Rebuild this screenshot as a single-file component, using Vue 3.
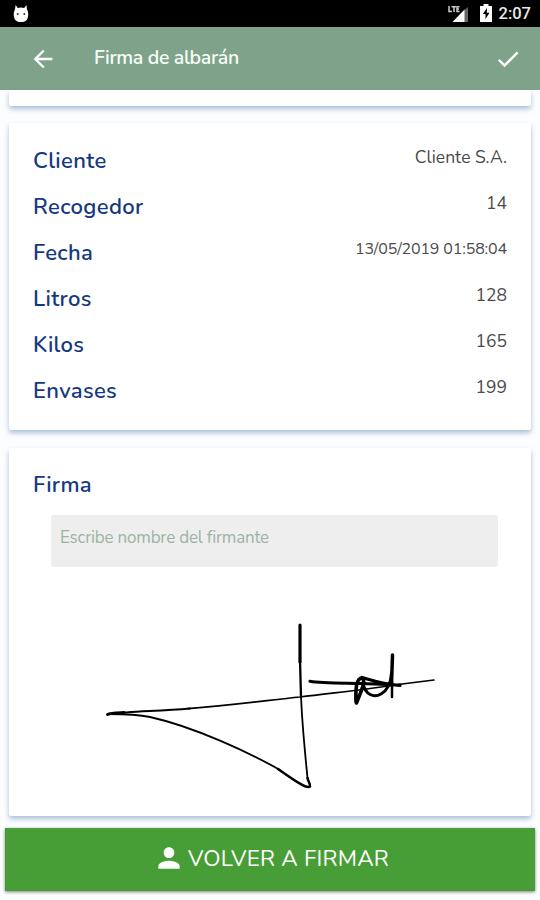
<template>
  <div class="screen">
    <div class="status-bar">
      <svg class="status-cat" width="18" height="20" viewBox="0 0 18 20">
        <path fill="#fff" d="M3 5.500 3.600 1l2.200 3a9 9 0 0 1 6.400 0L14.400 1l.6 4.500C17 9 16.400 14 14.500 16.200 11.800 18.700 6.200 18.700 3.500 16.200 1.600 14 1 9 3 5.500Z" />
        <circle cx="5.700" cy="10" r="1" fill="#333" />
        <circle cx="12.300" cy="10" r="1" fill="#333" />
      </svg>
      <div class="status-right">
        <svg class="status-signal" width="22" height="18" viewBox="0 0 22 18">
          <path fill="#666" d="M16 5.500 20 2v15h-4z" />
          <path fill="#fff" d="M4.500 17 16.500 4.500V17z" />
          <path fill="none" stroke="#ccc" stroke-width="1.500" d="M1 1v5.500H4M3.500 1.800h4.500M6 1.800V7M11.500 1.800H9v4.700h2.500M9 4h2" />
        </svg>
        <svg class="status-battery" width="12" height="18" viewBox="0 0 12 18">
          <path fill="#fff" d="M3.500 0h5v2H12v16H0V2h3.500z" />
          <path fill="#000" d="M7 4 2.800 10h2.700v5L9.500 8.700H6.800z" />
        </svg>
        <span class="status-time">2:07</span>
      </div>
    </div>

    <header class="app-bar">
      <svg class="back-icon" width="28" height="28" viewBox="0 0 24 24">
        <path fill="#fff" d="M20 11H7.830l5.590-5.590L12 4l-8 8 8 8 1.410-1.410L7.830 13H20v-2z" />
      </svg>
      <h1 class="app-title">Firma de albarán</h1>
      <svg class="check-icon" width="28" height="28" viewBox="0 0 24 24">
        <path fill="#fff" d="M9 16.170 4.830 12l-1.420 1.410L9 19 21 7l-1.410-1.410z" />
      </svg>
    </header>

    <main class="content">
      <section class="card card-previous"></section>

      <section class="card card-data">
        <div v-for="row in rows" :key="row.label" class="row">
          <span class="row-label">{{ row.label }}</span>
          <span class="row-value" :class="{ 'row-value-date': row.small }">{{ row.value }}</span>
        </div>
      </section>

      <section class="card card-sign">
        <h2 class="row-label">Firma</h2>
        <input v-model="signer" class="signer-input" type="text" placeholder="Escribe nombre del firmante" />
        <svg class="signature" width="447" height="230" viewBox="51 575 447 230">
          <g fill="none" stroke="#000" stroke-linecap="round" stroke-linejoin="round">
            <path stroke-width="3.200" d="M300 625V662" />
            <path stroke-width="2.300" d="M300 660 301 697" />
            <path stroke-width="1.800" d="M301 695C302 725 306 762 307.500 778" />
            <path stroke-width="2.500" d="M307.500 778C308 781 310.500 784 310 786.500 307 789 298 783 278 769" />
            <path stroke-width="1.800" d="M280 770C250 753 195 727 150 717 136 714 124 714 108 714" />
            <path stroke-width="2.900" d="M107.500 714.500C110 713 113 713 124 712.500" />
            <path stroke-width="2.100" d="M112 714C130 711 155 711.500 190 708.500" />
            <path stroke-width="1.700" d="M188 708.700C235 705 270 700 300 697 330 693 365 690 398 684.500 410 683 422 681.500 434 680" />
            <path stroke-width="3.200" d="M310 681.300C322 683.500 342 683 363 683.500" />
            <path stroke-width="3.600" d="M356.500 703C360 693 367 681 362 678 356 678 355.500 690 356 702" />
            <path stroke-width="3.200" d="M362 677.500C371 680 381 684 400 685.500M361 683.500 400 685" />
            <path stroke-width="3" d="M363 683C365 695 374 698 381 694 388 690 391 681 391.500 673" />
            <path stroke-width="3.500" d="M392.500 655 391.500 684" />
            <path stroke-width="2.500" d="M392 682V697" />
          </g>
        </svg>
      </section>

      <button class="sign-button" type="button">
        <svg class="person-icon" width="32" height="32" viewBox="0 0 24 24">
          <path fill="#fff" d="M12 12c2.210 0 4-1.790 4-4s-1.790-4-4-4-4 1.790-4 4 1.790 4 4 4zm0 2c-2.670 0-8 1.340-8 4v2h16v-2c0-2.660-5.330-4-8-4z" />
        </svg>
        <span>VOLVER A FIRMAR</span>
      </button>
    </main>
  </div>
</template>

<script setup>
import { ref } from 'vue'

const signer = ref('')

const rows = [
  { label: 'Cliente', value: 'Cliente S.A.' },
  { label: 'Recogedor', value: '14' },
  { label: 'Fecha', value: '13/05/2019 01:58:04', small: true },
  { label: 'Litros', value: '128' },
  { label: 'Kilos', value: '165' },
  { label: 'Envases', value: '199' },
]
</script>

<style>
body {
  margin: 0;
}
</style>

<style scoped>
.screen {
  height: 900px;
  display: flex;
  flex-direction: column;
  overflow: hidden;
  background: #fcfdff;
  font-family: Nunito, "Noto Sans", sans-serif;
}

.status-bar {
  height: 27px;
  flex: none;
  display: flex;
  align-items: center;
  justify-content: space-between;
  padding: 0 9px 0 12px;
  background: #000;
}

.status-right {
  display: flex;
  align-items: center;
}

.status-signal {
  margin-right: 1px;
}

.status-battery {
  margin: 0 7px 2px 9px;
}

.status-time {
  color: #e8e8e8;
  font-family: Roboto, sans-serif;
  font-size: 16.5px;
  font-weight: 500;
  line-height: 27px;
}

.app-bar {
  height: 63px;
  flex: none;
  box-sizing: border-box;
  display: flex;
  align-items: center;
  padding: 0 18px 0 29px;
  background: #7fa28b;
}

.app-title {
  flex: 1;
  margin: 0 0 2px 37px;
  color: #f8fff8;
  font-size: 19.5px;
  font-weight: 600;
  letter-spacing: -0.35px;
}

.content {
  flex: 1;
  display: flex;
  flex-direction: column;
}

.card {
  box-sizing: border-box;
  margin: 0 9px;
  background: #fff;
  border-radius: 2px;
  box-shadow: 0 3px 5px rgba(60, 110, 160, 0.42);
}

.card-previous {
  height: 16px;
}

.card-data {
  height: 307px;
  margin-top: 17px;
  padding: 15px 24px 0;
}

.row {
  height: 46px;
  display: flex;
  justify-content: space-between;
}

.row-label {
  margin: 0;
  color: #15397f;
  font-size: 22px;
  font-weight: 600;
  line-height: 46px;
  letter-spacing: 0.35px;
}

.row-value {
  color: #4a4a4a;
  font-size: 17.5px;
  line-height: 38px;
}

.row-value-date {
  font-size: 16px;
  letter-spacing: -0.15px;
}

.card-sign {
  height: 368px;
  margin-top: 18px;
  padding: 14px 24px 0;
  display: flex;
  flex-direction: column;
}

.signer-input {
  width: 447px;
  height: 52px;
  flex: none;
  box-sizing: border-box;
  margin: 7px 0 0 18px;
  padding: 0 9px 8px;
  border: 0;
  border-radius: 2px;
  outline: none;
  background: #eee;
  color: #333;
  font-family: inherit;
  font-size: 17px;
  letter-spacing: -0.2px;
}

.signer-input::placeholder {
  color: #9cb3a4;
  opacity: 1;
}

.signature {
  flex: none;
  margin: 8px 0 0 18px;
}

.sign-button {
  height: 63px;
  flex: none;
  display: flex;
  align-items: center;
  justify-content: center;
  gap: 3px;
  margin: 12px 5px 0;
  padding: 0 0 3px 2px;
  border: 0;
  background: #479d36;
  box-shadow: 0 1px 3px rgba(0, 0, 0, 0.5);
  color: #fff;
  font-family: inherit;
  font-size: 22.5px;
  letter-spacing: 0.2px;
}
</style>
